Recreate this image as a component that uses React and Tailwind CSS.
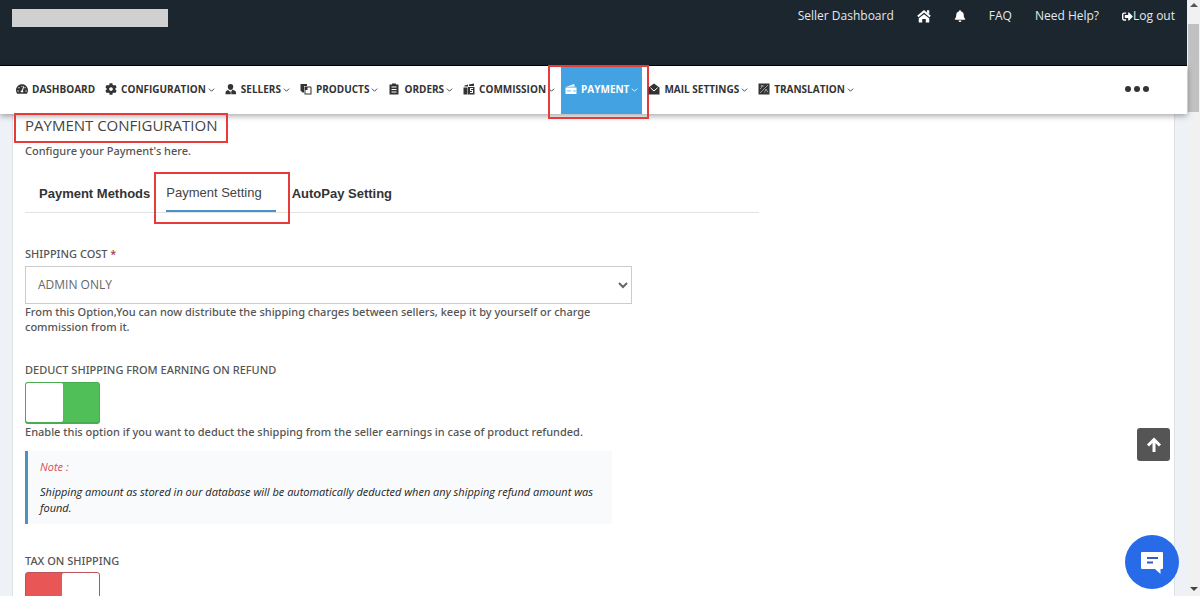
import React from "react";
import { FaTachometerAlt, FaCog, FaBell, FaSignOutAlt } from "react-icons/fa";

const Icon = ({ children }) => (
  <svg viewBox="0 0 24 24" className="size-3 shrink-0" fill="currentColor" aria-hidden="true">
    {children}
  </svg>
);

const SellerIcon = () => (
  <Icon>
    <path d="M11 2a5.500 5.500 0 0 0-5.500 5.500c0 3 2.500 6.500 5.500 6.500s5.500-3.500 5.500-6.500A5.500 5.500 0 0 0 11 2z" />
    <path d="M6.500 13.500 2.500 16c-1.500 1.200-1.500 4-1.500 6.500h10.500v-5c-2 0-4-2-5-4zM15 13c-.5 1.500-1.500 2.500-2.500 3.500v6H22c.5-3 0-5.500-1.500-6.500z" />
  </Icon>
);
const ProductsIcon = () => (
  <Icon>
    <path d="M1 2h13v4H8v13H5l-4-4z" />
    <path fillRule="evenodd" d="M9 7h13l1 2v14H9zM15 9v5h-4v7h10V9z" />
  </Icon>
);
const OrdersIcon = () => (
  <Icon>
    <path fillRule="evenodd" d="M3 3h5V1h8v2h5v20H3zM7 7v2h10V7zM7 12v2h10v-2zM7 17v2h10v-2z" />
  </Icon>
);
const CommissionIcon = () => (
  <Icon>
    <path d="M1 9h8v14H1zM3 5l7-2v4H3zM12 3l10-2v5H12z" />
    <path fillRule="evenodd" d="M10 8h13v15H10zM14 10v6h4v2h-4v2h6v-6h-4v-2h4v-2z" />
  </Icon>
);
const PaymentIcon = () => (
  <Icon>
    <path d="M2 8 18 2l2 5zM1 9h22v3H1z" />
    <path fillRule="evenodd" d="M1 12h22v10H1zM4 15v1.500h8V15zM17 15v2h4v-2z" />
  </Icon>
);
const MailIcon = () => (
  <Icon>
    <path d="M12 1 23 9v14H1V9z" />
    <path d="M5 9.500 12 16l7-6.500" fill="none" stroke="#fff" strokeWidth="2" />
  </Icon>
);
const TranslationIcon = () => (
  <Icon>
    <path d="M1 1h22v22H1z" />
    <path d="m4 20 16-16M5 6h7M8 4c0 4-1 6-4 8M13 19l3-7 4 7" fill="none" stroke="#fff" strokeWidth="1" />
  </Icon>
);
const HomeIcon = () => (
  <svg viewBox="0 0 24 24" className="size-3.5" fill="currentColor" aria-hidden="true">
    <path d="M12 9 21 16v7h-6v-6H9v6H3v-7z" />
    <path d="M1.500 13 12 4l10.500 9" fill="none" stroke="currentColor" strokeWidth="3.500" />
    <path d="M17 2h4v7l-4-3z" />
  </svg>
);

const nav = [
  { label: "DASHBOARD", icon: <FaTachometerAlt className="size-3" />, plain: true },
  { label: "CONFIGURATION", icon: <FaCog className="size-3" /> },
  { label: "SELLERS", icon: <SellerIcon /> },
  { label: "PRODUCTS", icon: <ProductsIcon /> },
  { label: "ORDERS", icon: <OrdersIcon /> },
  { label: "COMMISSION", icon: <CommissionIcon /> },
  { label: "PAYMENT", icon: <PaymentIcon />, active: true },
  { label: "MAIL SETTINGS", icon: <MailIcon /> },
  { label: "TRANSLATION", icon: <TranslationIcon /> },
];

function TopBar() {
  return (
    <header className="flex h-[66px] shrink-0 items-start justify-between border-b border-black bg-[#1b262f] pr-3 pl-3 text-xs text-[#e4e8eb]">
      <div className="mt-[9px] h-[18px] w-[156px] bg-[#d0d0d0]" />
      <nav className="flex h-8 items-center gap-[23px]">
        <a href="#seller">Seller Dashboard</a>
        <a href="#home" aria-label="Home" className="text-white"><HomeIcon /></a>
        <a href="#alerts" aria-label="Notifications" className="text-white"><FaBell className="size-3" /></a>
        <a href="#faq">FAQ</a>
        <a href="#help">Need Help?</a>
        <a href="#logout" className="flex items-center"><FaSignOutAlt className="size-[11px] text-white" />Log out</a>
      </nav>
    </header>
  );
}

function MenuBar() {
  return (
    <div className="relative z-10 flex h-12 shrink-0 items-stretch justify-between bg-white pr-[38px] pl-3 shadow-[0_2px_6px_rgba(0,0,0,0.35)]">
      <ul className="flex gap-0.5 text-[10px] font-bold text-[#333]">
        {nav.map((n) => (
          <li key={n.label} className={n.active ? "relative bg-[#43a2e2] text-white" : "relative"}>
            <a href="#menu" className="flex h-full items-center px-1 pb-0.5 whitespace-nowrap">
              {n.icon}
              <span className="ml-1">{n.label}</span>
              {!n.plain && (
                <svg viewBox="0 0 8 8" className="ml-0.5 size-[7px]" fill="none" stroke="currentColor" aria-hidden="true">
                  <path d="m1 3 3 3 3-3" />
                </svg>
              )}
            </a>
            {n.active && <span className="pointer-events-none absolute -top-px -right-[7px] -bottom-[5px] -left-[13px] border-2 border-[#e63b3b]" />}
          </li>
        ))}
      </ul>
      <button type="button" aria-label="More" className="flex items-center gap-[3px] pb-0.5 text-[#333]">
        <span className="size-1.5 rounded-full bg-current" />
        <span className="size-1.5 rounded-full bg-current" />
        <span className="size-1.5 rounded-full bg-current" />
      </button>
    </div>
  );
}

const toggleBase =
  "relative block h-[42px] w-[75px] appearance-none rounded-[3px] border bg-[#e85656] border-[#b8545a] before:absolute before:inset-y-0 before:right-0 before:w-[37px] before:rounded-[2px] before:bg-white before:content-[''] checked:border-[#48ad52] checked:border-b-2 checked:bg-[#50bf58] checked:before:right-auto checked:before:left-0";

export default function App() {
  return (
    <div className="flex h-screen overflow-hidden bg-[#eef2f6] font-['Open_Sans',sans-serif] text-[#555]">
      <div className="flex min-w-0 flex-1 flex-col">
        <TopBar />
        <MenuBar />
        <main className="mr-3 ml-3 min-h-0 flex-1 overflow-hidden border-x border-[#dde2e6] bg-white px-3">
          <h1 className="text-[15px] leading-[23px] text-[#444]">PAYMENT CONFIGURATION</h1>
          <p className="mt-1.5 font-['Noto_Sans',sans-serif] text-[11px] leading-4 font-medium">Configure your Payment's here.</p>

          <ul className="mt-3.5 flex h-10 max-w-[734px] items-stretch gap-4 border-b border-[#e2e2e2] pl-3.5 font-['Liberation_Sans',sans-serif] text-[13px] text-[#333]">
            <li className="flex"><a href="#methods" className="flex items-center pt-0.5 font-bold">Payment Methods</a></li>
            <li className="relative flex">
              <a href="#setting" aria-current="page" className="flex items-center border-b-2 border-[#4b93c7] pt-0.5 pr-3.5 text-[#444]">Payment Setting</a>
              <span className="pointer-events-none absolute -top-px -right-3.5 -bottom-3 -left-3 border-2 border-[#e63b3b]" />
            </li>
            <li className="flex"><a href="#autopay" className="flex items-center pt-0.5 font-bold">AutoPay Setting</a></li>
          </ul>

          <div className="mt-[33px] flex max-w-[607px] flex-col font-['Noto_Sans',sans-serif] text-[11px] leading-4 font-medium">
            <label htmlFor="cost">SHIPPING COST <span className="text-[#a83a44]">*</span></label>
            <select id="cost" className="mt-1 h-[38px] w-full border border-[#ccc] bg-white px-2 pb-0.5 font-['Open_Sans',sans-serif] text-xs font-normal text-[#666]">
              <option>ADMIN ONLY</option>
            </select>
            <p className="leading-[15px]">From this Option,You can now distribute the shipping charges between sellers, keep it by yourself or charge commission from it.</p>

            <label htmlFor="deduct" className="mt-7">DEDUCT SHIPPING FROM EARNING ON REFUND</label>
            <input id="deduct" type="checkbox" defaultChecked className={"mt-1 " + toggleBase} />
            <p>Enable this option if you want to deduct the shipping from the seller earnings in case of product refunded.</p>

            <div className="mt-[11px] mr-5 border-l-[3px] border-[#4b93b9] bg-[#f8fafb] py-2 pr-2 pl-3 font-['Open_Sans',sans-serif] text-[#222] italic">
              <p className="text-[#dc4b54]">Note :</p>
              <p className="mt-[9px]">Shipping amount as stored in our database will be automatically deducted when any shipping refund amount was found.</p>
            </div>

            <label htmlFor="tax" className="mt-[29px]">TAX ON SHIPPING</label>
            <input id="tax" type="checkbox" className={"mt-[3px] " + toggleBase} />
          </div>
        </main>
      </div>

      <div className="flex w-[13px] shrink-0 flex-col items-center bg-[#f1f1f1]" aria-hidden="true">
        <svg viewBox="0 0 8 6" className="mt-0.5 h-1.5 w-2" fill="#555"><path d="M0 5 4 1l4 4z" /></svg>
        <div className="mt-4 h-[88px] w-[11px] bg-[#c1c1c1]" />
        <svg viewBox="0 0 8 6" className="mt-auto mb-1 h-1.5 w-2" fill="#444"><path d="m0 1 4 4 4-4z" /></svg>
      </div>

      <div className="pointer-events-none absolute top-[113px] left-3.5 z-20 h-[30px] w-[214px] border-2 border-[#e63b3b]" />
      <button type="button" aria-label="Back to top" className="fixed right-[30px] bottom-[135px] flex size-[33px] items-center justify-center rounded-[3px] bg-[#555] text-white">
        <svg viewBox="0 0 16 16" className="size-4" fill="none" stroke="currentColor" strokeWidth="3" aria-hidden="true">
          <path d="M8 15V3M2 8.500 8 2.500l6 6" />
        </svg>
      </button>
      <button type="button" aria-label="Open chat" className="fixed right-[21px] bottom-[7px] flex size-[54px] items-center justify-center rounded-full bg-[#276be8]">
        <svg viewBox="0 0 24 24" className="size-6" aria-hidden="true">
          <path d="M2 2h20a1 1 0 0 1 1 1v15a1 1 0 0 1-1 1h-1.500v5L15 19H2a1 1 0 0 1-1-1V3a1 1 0 0 1 1-1z" fill="#fff" />
          <path d="M7 8h11M7 12.500h6" stroke="#3a5db8" strokeWidth="2" />
        </svg>
      </button>
    </div>
  );
}
